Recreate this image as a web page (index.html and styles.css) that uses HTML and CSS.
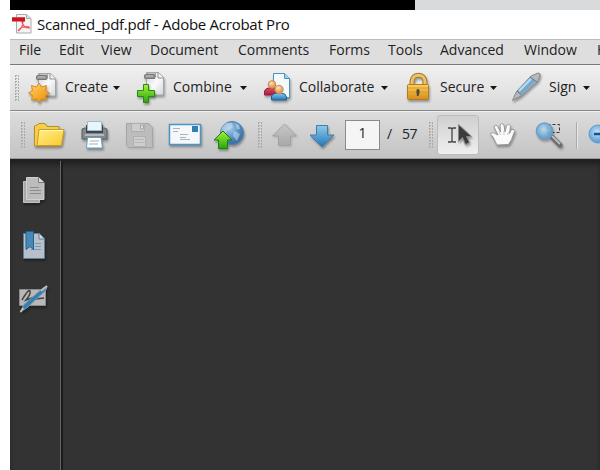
FILE: index.html
```html
<!DOCTYPE html>
<html lang="en">
<head>
<meta charset="utf-8">
<title>Scanned_pdf.pdf - Adobe Acrobat Pro</title>
<link rel="stylesheet" href="styles.css">
</head>
<body>
<svg class="defs" width="0" height="0" aria-hidden="true">
  <defs>
    <linearGradient id="paper" x2="1" y2="1"><stop stop-color="#cfd2d4"/><stop offset=".5" stop-color="#fafafa"/><stop offset="1" stop-color="#d4d6d8"/></linearGradient>
    <linearGradient id="blue" x2="0" y2="1"><stop stop-color="#8ecbed"/><stop offset="1" stop-color="#2475b4"/></linearGradient>
    <linearGradient id="gold" x2="0" y2="1"><stop stop-color="#f9d25c"/><stop offset="1" stop-color="#d98a16"/></linearGradient>
    <linearGradient id="star" x2=".7" y2="1"><stop stop-color="#ffd96b"/><stop offset="1" stop-color="#f08f0c"/></linearGradient>
    <linearGradient id="green" x2="0" y2="1"><stop stop-color="#a6f23c"/><stop offset="1" stop-color="#28a40b"/></linearGradient>
    <linearGradient id="gray" x2="0" y2="1"><stop stop-color="#c8c8c8"/><stop offset="1" stop-color="#a8a8a8"/></linearGradient>
    <linearGradient id="yellow" x2="1" y2="1"><stop stop-color="#fff08a"/><stop offset="1" stop-color="#fac92e"/></linearGradient>
    <linearGradient id="red" x2="0" y2="1"><stop stop-color="#e0496b"/><stop offset="1" stop-color="#a51b3f"/></linearGradient>
    <radialGradient id="globe" cx=".4" cy=".3" r=".75"><stop stop-color="#a9cdeb"/><stop offset=".6" stop-color="#5289bd"/><stop offset="1" stop-color="#2f649c"/></radialGradient>
    <radialGradient id="lens" cx=".45" cy=".4"><stop stop-color="#c5e3f7"/><stop offset="1" stop-color="#62a5d8"/></radialGradient>
    <radialGradient id="face" cx=".4" cy=".3"><stop stop-color="#ffe8ba"/><stop offset="1" stop-color="#e5a15a"/></radialGradient>
    <g id="binder">
      <path d="M10.500 3.500h12l5 5v17.500h-17z" fill="url(#paper)" stroke="#a3a5a7"/>
      <path d="M22 3.500v5.500h5.500" fill="#f4f4f4" stroke="#8c8e90"/>
      <path d="M11.500 8v-4h8v4" fill="none" stroke="#a6a8aa"/>
      <rect x="8.500" y="5.500" width="10.500" height="4" rx="1" fill="#909294" stroke="#747678"/>
      <path d="M10 7h7" stroke="#c4c6c8"/>
    </g>
  </defs>
</svg>
<div class="backdrop"></div>
<main class="window">
  <header class="titlebar">
    <svg class="app-icon" viewBox="0 0 20 20">
      <path d="M4.500.500h10l4.500 4v14.500h-14.500z" fill="#f4f4f4" stroke="#aaa"/>
      <path d="M14.500.500v4h4.500" fill="#ddd" stroke="#aaa"/>
      <path d="M6 17c3-2 5-6 5-10 0-2-2-1-1 1 1 4 4 6 7 6 1 0 0-2-4-1-3 0-6 2-7 4" fill="none" stroke="#ee5457" stroke-width="1.200"/>
      <path d="M0 3h13v4.500H0z" fill="#c8171c"/><path d="M0 3h13v1H0z" fill="#e4484a"/>
    </svg>
    <span class="title">Scanned_pdf.pdf - Adobe Acrobat Pro</span>
  </header>
  <nav class="menu">
    <span>File</span><span>Edit</span><span>View</span><span>Document</span><span>Comments</span><span>Forms</span><span>Tools</span><span>Advanced</span><span>Window</span><span>H</span>
  </nav>
  <section class="tasks">
    <i class="grip"></i>
    <svg viewBox="0 0 32 36"><g class="shadow"><use href="#binder"/></g><path class="shadow" d="M11 13l2.500 4 5-1.500-1 5 4 2.500-4 2.500 1 4.500-5-1-2.500 4-2.500-4-5 1 1-4.500-4-2.500 4-2.500-1-5 5 1.500z" fill="url(#star)" stroke="#d18a27"/></svg>
    <span>Create</span><i class="arrow"></i>
    <svg viewBox="0 0 32 36"><g class="shadow"><use href="#binder" y="-1"/></g><path class="shadow" d="M7.500 14.500h5v6h6v6h-6v6h-5v-6h-6v-6h6z" fill="url(#green)" stroke="#218b12"/></svg>
    <span>Combine</span><i class="arrow"></i>
    <svg viewBox="0 0 32 36"><g class="shadow">
      <path d="M10.500 3.500h11l5 5v19h-16z" fill="#f4f9fc" stroke="#4f91be"/><path d="M21.500 3.500v5h5" fill="#aacfe4" stroke="#4f91be"/>
      <path d="M1.500 25v-4q1-3 5-3h4q3 1 3 7z" fill="url(#red)" stroke="#9d1c3c"/><circle cx="9" cy="14.500" r="3.800" fill="url(#face)" stroke="#c98b4e"/>
      <path d="M8.500 30v-4q2-3 6-3h4q4 0 5 4v3z" fill="url(#blue)" stroke="#19649f"/><circle cx="16" cy="19.500" r="4.200" fill="url(#face)" stroke="#c98b4e"/></g></svg>
    <span>Collaborate</span><i class="arrow"></i>
    <svg viewBox="0 0 32 36"><g class="shadow"><path d="M6 17v-5c0-9 13-9 13 0v5" fill="none" stroke="#a97925" stroke-width="5"/><path d="M6 17v-5c0-9 13-9 13 0v5" fill="none" stroke="#e9c46b" stroke-width="3"/><rect x="1.500" y="14.500" width="21" height="15" rx="1" fill="url(#gold)" stroke="#b07c24"/><path d="M2 18h20M2 22h20M2 26h20" stroke="#d99a31"/><path d="M10.500 20q1.500-2 3 0v3l-1 3H11l-.5-3z" fill="#4b4940"/></g></svg>
    <span>Secure</span><i class="arrow"></i>
    <svg viewBox="0 0 32 36"><g class="shadow"><path d="M1.500 30.500l4-9L20 6l7-3q3 0 2 3l-2 5-17 15z" fill="#b4b9bd" stroke="#83888d"/><path d="M6 21.500L19 8l6 3-15 14z" fill="#72a9d0"/><path d="M8 21L20 9" stroke="#bcdcf0" stroke-width="2"/><path d="M19 7l7 5M6 21l4 4" stroke="#6f777e"/></g></svg>
    <span>Sign</span><i class="arrow"></i>
  </section>
  <section class="tools">
    <i class="grip"></i>
    <svg viewBox="32 115 36 40"><g class="shadow"><path d="M34.500 146v-20l2.500-1 2-1.500h6l2 3h12v3l4 1-3 15.500z" fill="#f6cf49" stroke="#bc8b25"/><path d="M37 145.500l2-16h25l-2.500 16z" fill="url(#yellow)" stroke="#c99a27"/><path d="M40 130.500h23" stroke="#fff8c5"/></g></svg>
    <svg viewBox="78 115 34 40"><g class="shadow"><path d="M84.500 128h20l2.500 1v10h-25v-10z" fill="#85888b" stroke="#5c5f62"/><path d="M86 125h17v8H86z" fill="#424549"/><path d="M87.500 121.500h14v9h-14z" fill="#e8f5fa" stroke="#9abfd0"/><path d="M85 134h19v2H85z" fill="#b5b7b9"/><path d="M87.500 137.500h13.500l1.500 10.500h-16z" fill="#fff" stroke="#5ba3c8"/><path d="M90 141h9M89 144h9" stroke="#aaa"/></g></svg>
    <svg viewBox="123 115 34 40"><g class="shadow soft"><path d="M126.500 123.500h22l4 4v20h-24l-2-2z" fill="#bcbcbc" stroke="#a5a5a5"/><path d="M131.500 123.500h13v8h-13z" fill="#cdcdcd" stroke="#aeaeae"/><path d="M140.500 125h3v4h-3z" fill="#dedede" stroke="#a4a4a4"/><path d="M133.500 136.500h12v10h-12z" fill="#cecece" stroke="#b0b0b0"/><path d="M135 139.500h9M135 142.500h9" stroke="#b8b8b8"/></g></svg>
    <svg viewBox="166 115 38 40"><g class="shadow"><path d="M169.500 124.500h31v20h-31z" fill="#f4f8fa" stroke="#4b94c6" stroke-width="1.500"/><path d="M192 126h6v6h-6z" fill="#347eb5"/><path d="M173 128.500h7M173 131.500h5M180 134.500h8M180 137.500h6M180 139.500h10" stroke="#adb2b5"/></g></svg>
    <svg viewBox="211 115 36 40"><g class="shadow"><circle cx="232" cy="133" r="11.500" fill="url(#globe)" stroke="#5280aa"/><path d="M222 127l4-4 6 0 1 4-6 4-1 3-5-2zM235 123l4 2 1 4-3 0zM234 131l6 3-3 7-4-5z" fill="#d4e6f2" opacity=".5"/><path d="M223 131l9 9h-4.500v8.500h-9v-8.500H214z" fill="url(#green)" stroke="#16830c"/></g></svg>
    <i class="grip"></i>
    <svg viewBox="270 115 30 40"><path class="shadow soft" d="M284.500 124l12 12h-6v9.500h-12v-9.500h-6z" fill="url(#gray)" stroke="#a2a2a2"/></svg>
    <svg viewBox="307 115 32 40"><path class="shadow" d="M316.500 125.500h11v9.500h6.500l-12 12-12-12h6.500z" fill="url(#blue)" stroke="#3e7dac"/></svg>
    <span class="page">1</span><span class="slash">/</span><span class="total">57</span>
    <i class="grip"></i>
    <span class="select"><svg viewBox="437 115 42 40"><path d="M448 128h3l1 1 1-1h3M452 129v12M448 142h3l1-1 1 1h3" fill="none" stroke="#444" stroke-width="1.300"/><path class="shadow" d="M458.500 124.500v17l4-4 3 7 4-2-3-6h5z" fill="#3c3c3c" stroke="#888"/></svg></span>
    <svg viewBox="486 115 34 40"><path class="shadow" d="M497 145l-4-8-2.500-3q1-2.500 4.500-.5l3 1.500-4-8q.5-3 3.500-1l3 6-.5-7q1.500-3 4 0l1 7 1.500-6.500q2.500-2.500 4 .5l-1 7.500 2-4q3.500-1 3 2l-3 8-3 5z" fill="#fafafa" stroke="#999"/><path d="M499 131l1.500 4M504 131v4M508.500 132l-1 3" stroke="#c5c5c5"/></svg>
    <svg viewBox="534 115 32 40"><path d="M547.500 124.500h12v8h-12z" fill="none" stroke="#333" stroke-dasharray="3 2"/><g class="shadow"><path d="M552 137l8 8" stroke="#686b6e" stroke-width="5" stroke-linecap="round"/><path d="M552 136l8 8" stroke="#bbb" stroke-width="2"/><circle cx="544.500" cy="131" r="8" fill="url(#lens)" fill-opacity=".85" stroke="#6aa0c7" stroke-width="1.500"/></g></svg>
    <i class="rule"></i>
    <svg viewBox="587 115 20 40"><circle cx="598" cy="134" r="9" fill="url(#lens)" stroke="#5f9bc7"/><path d="M594 134h9" stroke="#175386" stroke-width="2.500"/></svg>
  </section>
  <section class="workspace">
    <aside>
      <svg viewBox="18 174 32 32"><g class="shadow"><path d="M23.500 181.500h16v21h-16z" fill="#aaa" stroke="#c2c2c2"/><path d="M26.500 177.500h12l5.500 5v17H26.500z" fill="#bcbcbc" stroke="#d0d0d0"/><path d="M38.500 177.500v5h5.500" fill="#ddd" stroke="#777"/><path d="M30 187.500h9M30 190.500h11M30 193.500h11" stroke="#8c8c8c"/></g></svg>
      <svg viewBox="18 228 32 32"><g class="shadow"><path d="M23.500 233.500h16l5 5v20h-21z" fill="#b7c0ca" stroke="#607d95"/><path d="M39 234v5h5" fill="#d4dce1" stroke="#607d95"/><path d="M35 243.500h6M35 246.500h6M31 249.500h10" stroke="#7d9aae"/><path d="M26 231.500h7.500v18l-3.500-3-4 3z" fill="#4688b6" stroke="#23628d"/></g></svg>
      <svg viewBox="18 282 32 32"><g class="shadow"><path d="M19.500 289.500h26v16h-26z" fill="#b8b8b8" stroke="#8c8c8c"/><path d="M22 300q7-12 8-9t-4 9l8-3 2 2 8-1" fill="none" stroke="#424242" stroke-width="1.500"/><path d="M20.500 312l3-7L43 288l4-2-1 4-18 17z" fill="#397dae" stroke="#769db9"/><path d="M41 291l6-5M20.500 312l3-4" stroke="#bbb" stroke-width="2"/></g></svg>
    </aside>
    <div class="document-pane"></div>
  </section>
</main>
</body>
</html>
```
FILE: styles.css
```css
* { box-sizing: border-box; }
body { margin: 0; width: 600px; height: 470px; overflow: hidden; background: #fff; font-family: "Open Sans", sans-serif; font-size: 14px; color: #222; }
svg { display: block; overflow: visible; }
.defs { position: absolute; }
.backdrop { height: 10px; margin-left: 10px; background: linear-gradient(90deg, #000 405px, #d8dadc 405px); }
.window { margin-left: 10px; width: 590px; height: 460px; overflow: hidden; }
.titlebar { height: 29px; display: flex; align-items: center; gap: 5px; padding: 0 0 1px 2px; color: #111; }
.app-icon { width: 20px; height: 20px; }
.title { font-size: 15px; line-height: 28px; white-space: nowrap; letter-spacing: -.26px; }
.menu { height: 26px; background: #dedede; border-top: 1px solid #bbb; border-bottom: 1px solid #777; display: grid; grid-template-columns: 40px 42px 49px 88px 91px 59px 52px 84px 73px 40px; padding-left: 9px; line-height: 19px; white-space: nowrap; }
.tasks { height: 46px; background: linear-gradient(#f0f0f0, #d9d9d9); border-top: 1px solid #f4f4f4; border-bottom: 1px solid #888; display: grid; grid-template-columns: 14px 37px 48px 23px 37px 67px 23px 36px 82px 25px 34px 50px 21px 38px 34px 17px; align-items: center; padding-left: 4px; white-space: nowrap; }
.tasks > svg { width: 32px; height: 36px; }
.tasks > span { line-height: 20px; padding-bottom: 2px; }
.arrow { width: 7px; height: 4px; background: #151515; clip-path: polygon(0 0, 100% 0, 50% 100%); }
.grip { width: 5px; height: 27px; background: conic-gradient(#aaa 90deg, transparent 0) 0 0 / 3px 3px; }
.tools { height: 48px; background: linear-gradient(#dcdcdc, #c3c3c3); border-top: 1px solid #f1f1f1; border-bottom: 1px solid #999; display: grid; grid-template-columns: 12px 46px 45px 43px 45px 46px 13px 37px 38px 42px 15px 26px 9px 49px 48px 42px 11px 20px; align-items: center; padding-left: 10px; white-space: nowrap; }
.tools > svg { height: 40px; }
.tools > svg:nth-of-type(1) { width: 36px; }
.tools > svg:nth-of-type(2), .tools > svg:nth-of-type(3), .tools > svg:nth-of-type(8) { width: 34px; }
.tools > svg:nth-of-type(4) { width: 38px; }
.tools > svg:nth-of-type(5) { width: 36px; }
.tools > svg:nth-of-type(6) { width: 30px; }
.tools > svg:nth-of-type(7), .tools > svg:nth-of-type(9) { width: 32px; }
.tools > svg:nth-of-type(10) { width: 20px; }
.page { width: 35px; height: 30px; background: #f5f5f5; border: 1px solid #8b8b8b; text-align: center; line-height: 24px; }
.slash, .total { line-height: 20px; padding-bottom: 2px; letter-spacing: -.4px; }
.select { width: 42px; height: 40px; border: 1px solid #bcbcbc; border-radius: 3px; background: linear-gradient(#d0d0d0, #efefef); }
.select svg { width: 42px; height: 40px; margin: -1px; }
.rule { width: 2px; height: 27px; background: #aaa; border-right: 1px solid #e9e9e9; }
.shadow { filter: drop-shadow(1px 2px 1px #0005); }
.soft { filter: drop-shadow(1px 1px 1px #0002); }
.workspace { height: 311px; display: flex; background: #333; border-top: 2px solid #202020; box-shadow: inset 0 4px 4px #222; }
aside { width: 53px; border-right: 2px solid #1b1b1b; box-shadow: inset -1px 0 #666; padding: 13px 0 0 8px; display: flex; flex-direction: column; gap: 22px; }
aside svg { width: 32px; height: 32px; flex: none; }
.document-pane { flex: 1; }
```
